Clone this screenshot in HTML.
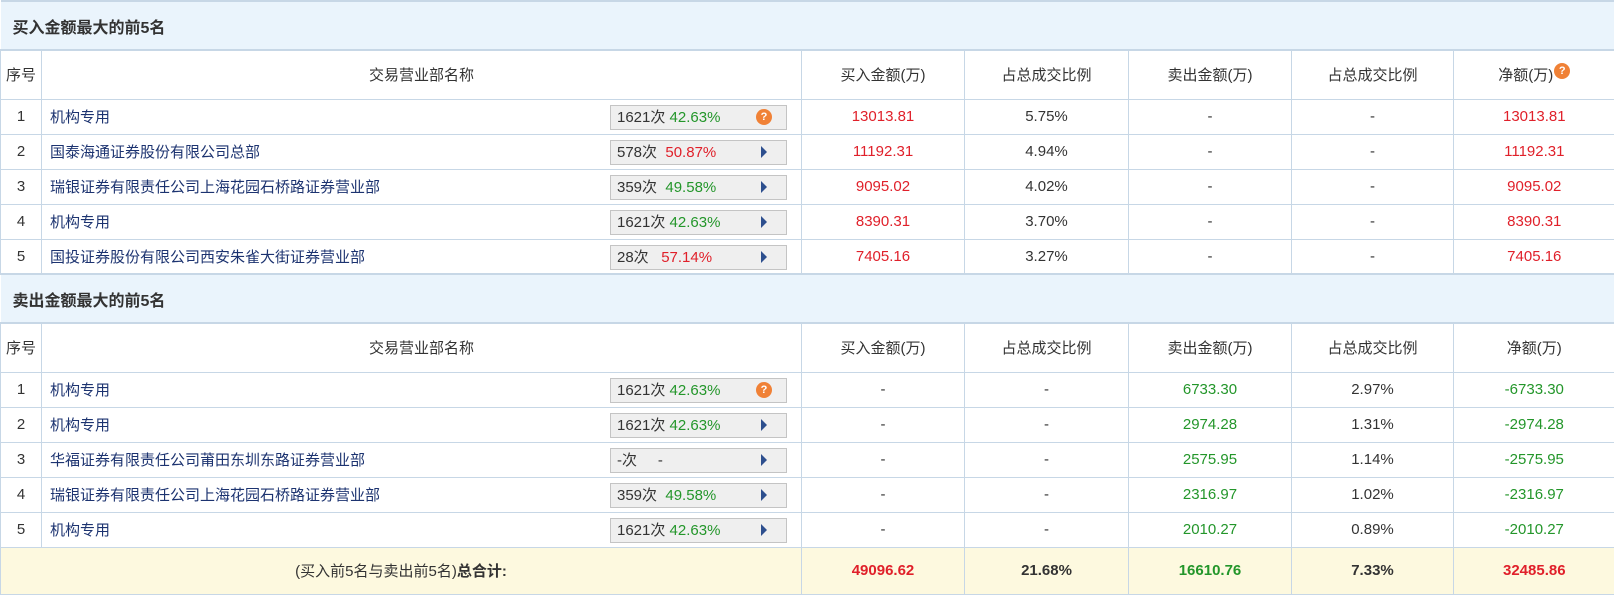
<!DOCTYPE html>
<html><head><meta charset="utf-8">
<style>
*{margin:0;padding:0;box-sizing:border-box}
body{width:1614px;height:594px;overflow:hidden;background:#fff;font-family:"Liberation Sans","Noto Sans CJK SC",sans-serif;font-size:15px;color:#333}
table{border-collapse:collapse;table-layout:fixed;width:1614px}
td{border:1px solid #c7d7e6;text-align:center;white-space:nowrap;overflow:hidden;vertical-align:middle}
tr.sec td{background:#eaf4fc;text-align:left;padding-left:12px;font-weight:bold;font-size:16px;height:49px;border-left:none;border-right:none;border-top:2px solid #c7d7e6;border-bottom:2px solid #c7d7e6}
tr.hd td{height:49px}
tr.r td{height:35px}
td.n{text-align:left;padding-left:8px;color:#1c3370;position:relative}
.box{position:absolute;left:568px;top:5px;width:177px;height:25px;background:#efefef;border:1px solid #c4c4c4;text-align:left;padding-left:6px;line-height:23px;color:#333}
.box .ic{position:absolute;right:14px;top:0;height:23px;width:16px;display:flex;align-items:center;justify-content:center;line-height:0}
.q{display:inline-block;width:16px;height:16px;border-radius:8px;background:#f08136;color:#fff;font-size:11px;line-height:16px;text-align:center;font-weight:bold}
.tri{width:0;height:0;border-left:6px solid #2d4f8e;border-top:6px solid transparent;border-bottom:6px solid transparent;display:block}
.red{color:#e0202a}.grn{color:#23962a}
tr.tot td{background:#fdf9df;height:47px;font-weight:bold}
td.last{border-right:none}
.hq{position:relative;top:-6px;margin-left:1px}
</style></head><body>
<table>
<colgroup><col style="width:41px"><col style="width:760px"><col style="width:163px"><col style="width:164px"><col style="width:163px"><col style="width:162px"><col style="width:161px"></colgroup>
<tr class="sec"><td colspan="7">买入金额最大的前5名</td></tr>
<tr class="hd"><td>序号</td><td>交易营业部名称</td><td>买入金额(万)</td><td>占总成交比例</td><td>卖出金额(万)</td><td>占总成交比例</td><td class="last">净额(万)<span class="q hq">?</span></td></tr>
<tr class="r"><td>1</td><td class="n">机构专用<div class="box">1621次 <span class="grn">42.63%</span><span class="ic"><span class="q">?</span></span></div></td><td class="red">13013.81</td><td>5.75%</td><td>-</td><td>-</td><td class="red last">13013.81</td></tr>
<tr class="r"><td>2</td><td class="n">国泰海通证券股份有限公司总部<div class="box">578次 &nbsp;<span class="red">50.87%</span><span class="ic"><span class="tri"></span></span></div></td><td class="red">11192.31</td><td>4.94%</td><td>-</td><td>-</td><td class="red last">11192.31</td></tr>
<tr class="r"><td>3</td><td class="n">瑞银证券有限责任公司上海花园石桥路证券营业部<div class="box">359次 &nbsp;<span class="grn">49.58%</span><span class="ic"><span class="tri"></span></span></div></td><td class="red">9095.02</td><td>4.02%</td><td>-</td><td>-</td><td class="red last">9095.02</td></tr>
<tr class="r"><td>4</td><td class="n">机构专用<div class="box">1621次 <span class="grn">42.63%</span><span class="ic"><span class="tri"></span></span></div></td><td class="red">8390.31</td><td>3.70%</td><td>-</td><td>-</td><td class="red last">8390.31</td></tr>
<tr class="r"><td>5</td><td class="n">国投证券股份有限公司西安朱雀大街证券营业部<div class="box">28次 &nbsp;&nbsp;<span class="red">57.14%</span><span class="ic"><span class="tri"></span></span></div></td><td class="red">7405.16</td><td>3.27%</td><td>-</td><td>-</td><td class="red last">7405.16</td></tr>
<tr class="sec"><td colspan="7">卖出金额最大的前5名</td></tr>
<tr class="hd"><td>序号</td><td>交易营业部名称</td><td>买入金额(万)</td><td>占总成交比例</td><td>卖出金额(万)</td><td>占总成交比例</td><td class="last">净额(万)</td></tr>
<tr class="r"><td>1</td><td class="n">机构专用<div class="box">1621次 <span class="grn">42.63%</span><span class="ic"><span class="q">?</span></span></div></td><td>-</td><td>-</td><td class="grn">6733.30</td><td>2.97%</td><td class="grn last">-6733.30</td></tr>
<tr class="r"><td>2</td><td class="n">机构专用<div class="box">1621次 <span class="grn">42.63%</span><span class="ic"><span class="tri"></span></span></div></td><td>-</td><td>-</td><td class="grn">2974.28</td><td>1.31%</td><td class="grn last">-2974.28</td></tr>
<tr class="r"><td>3</td><td class="n">华福证券有限责任公司莆田东圳东路证券营业部<div class="box">-次 &nbsp;&nbsp;&nbsp;&nbsp;-<span class="ic"><span class="tri"></span></span></div></td><td>-</td><td>-</td><td class="grn">2575.95</td><td>1.14%</td><td class="grn last">-2575.95</td></tr>
<tr class="r"><td>4</td><td class="n">瑞银证券有限责任公司上海花园石桥路证券营业部<div class="box">359次 &nbsp;<span class="grn">49.58%</span><span class="ic"><span class="tri"></span></span></div></td><td>-</td><td>-</td><td class="grn">2316.97</td><td>1.02%</td><td class="grn last">-2316.97</td></tr>
<tr class="r"><td>5</td><td class="n">机构专用<div class="box">1621次 <span class="grn">42.63%</span><span class="ic"><span class="tri"></span></span></div></td><td>-</td><td>-</td><td class="grn">2010.27</td><td>0.89%</td><td class="grn last">-2010.27</td></tr>
<tr class="tot"><td colspan="2"><span style="font-weight:normal">(买入前5名与卖出前5名)</span>总合计:</td><td class="red">49096.62</td><td>21.68%</td><td class="grn">16610.76</td><td>7.33%</td><td class="red last">32485.86</td></tr>
</table>
</body></html>
